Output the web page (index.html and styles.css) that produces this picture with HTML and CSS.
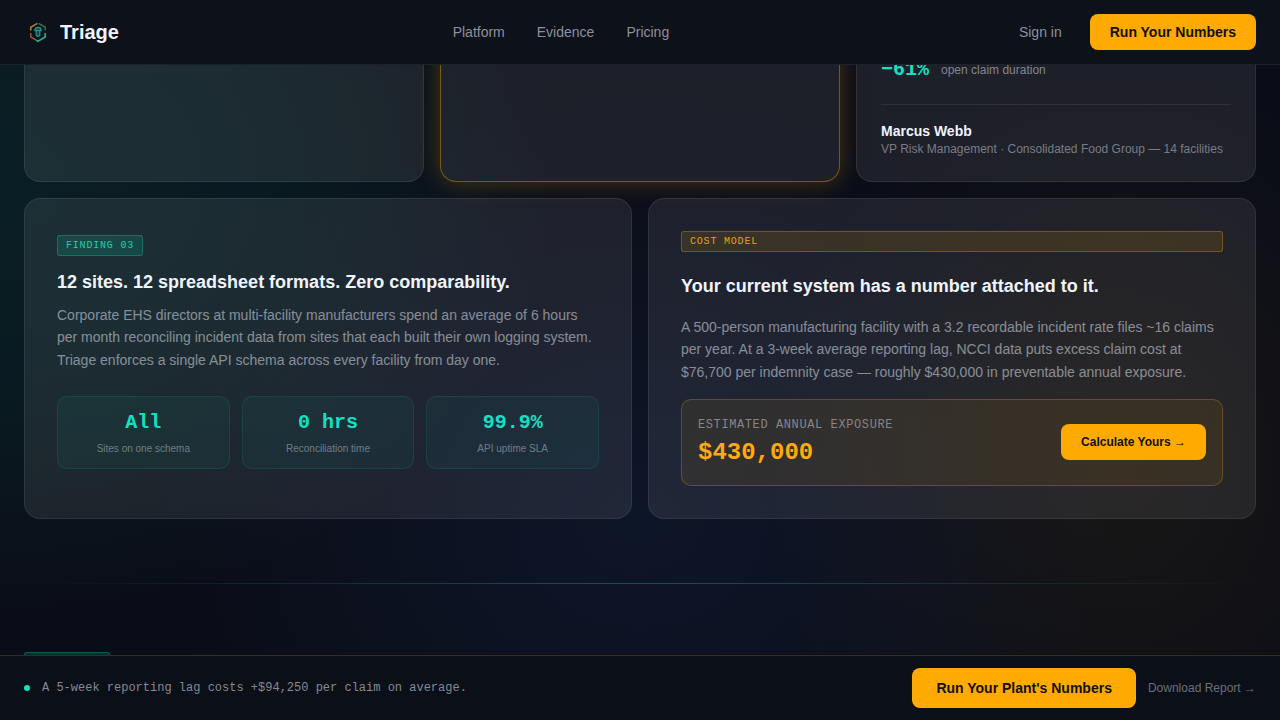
FILE: index.html
```html
<!DOCTYPE html>
<html lang="en">
<head>
  <meta charset="UTF-8">
  <meta name="viewport" content="width=device-width, initial-scale=1">
  <title>Triage</title>
  <link rel="stylesheet" href="styles.css">
</head>
<body>

  <header class="topbar">
    <a class="brand" href="#">
      <svg class="logo" viewBox="0 0 28 28" fill="none" aria-hidden="true">
        <path d="M13.4 5.4 6.8 9.2V12.4" stroke="#a67c30" stroke-width="1.6"/>
        <path d="M14.6 5.4 21.2 9.2V12.4" stroke="#267a5c" stroke-width="1.5"/>
        <path d="M6.8 15v4l5.4 3.2" stroke="#96582c" stroke-width="1.5"/>
        <path d="M21.2 15v4L14 23.2l-1.8-1" stroke="#2fa58c" stroke-width="1.7"/>
        <path d="M10.8 12.6c0-4.4 6.4-4.4 6.4 0z" fill="#134f4b" stroke="#23968a" stroke-width="1.2"/>
        <path d="M12.2 13v4.4l1.8 1.2 1.8-1.2V13" fill="#0f4a45" stroke="#23968a" stroke-width="1.2"/>
      </svg>
      <span>Triage</span>
    </a>
    <nav class="nav">
      <a href="#platform">Platform</a>
      <a href="#evidence">Evidence</a>
      <a href="#pricing">Pricing</a>
    </nav>
    <div class="actions">
      <a class="signin" href="#signin">Sign in</a>
      <button class="btn btn-nav">Run Your Numbers</button>
    </div>
  </header>

  <main>
    <section class="row row-3">
      <article class="card quote"></article>
      <article class="card quote featured"></article>
      <article class="card quote">
        <div class="result">
          <span class="result-value">−61%</span>
          <span class="result-label">open claim duration</span>
        </div>
        <div class="person">
          <div class="person-name">Marcus Webb</div>
          <div class="person-role">VP Risk Management · Consolidated Food Group — 14 facilities</div>
        </div>
      </article>
    </section>

    <section class="row row-2">
      <article class="card finding">
        <span class="tag">FINDING 03</span>
        <h2>12 sites. 12 spreadsheet formats. Zero comparability.</h2>
        <p>Corporate EHS directors at multi-facility manufacturers spend an average of 6 hours per month reconciling incident data from sites that each built their own logging system. Triage enforces a single API schema across every facility from day one.</p>
        <div class="stats">
          <div class="stat">
            <div class="stat-value">All</div>
            <div class="stat-label">Sites on one schema</div>
          </div>
          <div class="stat">
            <div class="stat-value">0 hrs</div>
            <div class="stat-label">Reconciliation time</div>
          </div>
          <div class="stat">
            <div class="stat-value">99.9%</div>
            <div class="stat-label">API uptime SLA</div>
          </div>
        </div>
      </article>

      <article class="card cost">
        <span class="tag tag-amber">COST MODEL</span>
        <h2>Your current system has a number attached to it.</h2>
        <p>A 500-person manufacturing facility with a 3.2 recordable incident rate files ~16 claims per year. At a 3-week average reporting lag, NCCI data puts excess claim cost at $76,700 per indemnity case — roughly $430,000 in preventable annual exposure.</p>
        <div class="exposure">
          <div>
            <div class="exposure-label">ESTIMATED ANNUAL EXPOSURE</div>
            <div class="exposure-value">$430,000</div>
          </div>
          <button class="btn btn-small">Calculate Yours →</button>
        </div>
      </article>
    </section>

    <hr class="divider">

    <section class="next">
      <span class="tag">&nbsp;</span>
    </section>
  </main>

  <footer class="bottombar">
    <div class="notice">
      <span class="dot"></span>
      <span>A 5-week reporting lag costs +$94,250 per claim on average.</span>
    </div>
    <div class="bottom-actions">
      <button class="btn btn-large">Run Your Plant's Numbers</button>
      <a class="download" href="#report">Download Report →</a>
    </div>
  </footer>

</body>
</html>
```

FILE: styles.css
```css
* {
  box-sizing: border-box;
}

body {
  margin: 0;
  min-height: 100vh;
  font-family: "Liberation Sans", Arial, sans-serif;
  color: #f0f4ff;
  background:
    radial-gradient(ellipse 560px 440px at 0 180px, rgba(0, 212, 170, 0.09), rgba(0, 212, 170, 0.07) 45%, transparent),
    radial-gradient(ellipse 480px 420px at 640px 520px, rgba(40, 80, 160, 0.13), transparent),
    radial-gradient(ellipse 360px 420px at 1120px 470px, rgba(255, 170, 0, 0.06), transparent),
    #0a0d17;
}

a {
  text-decoration: none;
}

h2,
p {
  margin: 0;
}

.topbar {
  position: fixed;
  top: 0;
  left: 0;
  right: 0;
  z-index: 10;
  display: flex;
  align-items: center;
  justify-content: space-between;
  height: 65px;
  padding: 0 24px;
  background: #0c111a;
  border-bottom: 1px solid #1b222b;
}

.brand {
  display: flex;
  align-items: center;
  gap: 8px;
  font-size: 20px;
  font-weight: bold;
  color: #f0f4ff;
}

.logo {
  width: 28px;
  height: 28px;
}

.nav {
  display: flex;
  gap: 32px;
}

.nav a,
.signin {
  font-size: 14px;
  color: #8c909b;
}

.actions {
  display: flex;
  align-items: center;
  gap: 12px;
}

.signin {
  padding: 0 16px;
}

.btn {
  border: none;
  border-radius: 8px;
  background: #ffaa00;
  color: #14100a;
  font-family: inherit;
  font-weight: bold;
  cursor: pointer;
}

.btn:hover {
  background: #ffb826;
}

.btn-nav {
  height: 36px;
  padding: 0 20px;
  font-size: 14px;
}

.btn-small {
  height: 36px;
  padding: 0 20px;
  font-size: 12px;
}

.btn-large {
  height: 40px;
  padding: 0 24px;
  font-size: 14px;
}

main {
  padding: 0 24px;
}

.row {
  display: grid;
  gap: 16px;
}

.row-3 {
  grid-template-columns: repeat(3, 1fr);
  margin-bottom: 16px;
}

.row-2 {
  grid-template-columns: repeat(2, 1fr);
}

.card {
  display: flex;
  flex-direction: column;
  background: rgba(255, 255, 255, 0.08);
  border: 1px solid rgba(255, 255, 255, 0.08);
  border-radius: 16px;
}

.quote {
  padding: 57px 24px 24px;
}

.featured {
  border-color: rgba(255, 170, 0, 0.4);
  box-shadow: 0 0 24px rgba(255, 170, 0, 0.25);
}

.result {
  display: flex;
  align-items: center;
  gap: 12px;
  margin-bottom: 22px;
}

.result-value {
  font-family: "Liberation Mono", monospace;
  font-size: 20px;
  line-height: 24px;
  font-weight: bold;
  color: #12e0c4;
}

.result-label {
  font-size: 12px;
  color: #83868f;
}

.person {
  padding-top: 16px;
  border-top: 1px solid rgba(255, 255, 255, 0.08);
}

.person-name {
  font-size: 14px;
  line-height: 20px;
  font-weight: bold;
}

.person-role {
  font-size: 12px;
  line-height: 16px;
  color: #797c86;
}

.finding {
  padding: 36px 32px 32px;
}

.cost {
  gap: 16px;
  padding: 32px;
}

.card h2 {
  font-size: 18px;
  line-height: 24px;
}

.card p {
  font-size: 14px;
  line-height: 1.6;
  color: rgba(240, 244, 255, 0.5);
}

.tag {
  padding: 4px 8px;
  border: 1px solid rgba(0, 212, 170, 0.3);
  border-radius: 3px;
  background: rgba(0, 212, 170, 0.16);
  font-family: "Liberation Mono", monospace;
  font-size: 10px;
  line-height: 11px;
  letter-spacing: 0.08em;
  color: #1fd0ae;
}

.tag-amber {
  border-color: rgba(255, 170, 0, 0.3);
  background: rgba(255, 170, 0, 0.12);
  color: #eba012;
}

.finding .tag {
  align-self: flex-start;
}

.finding h2 {
  margin: 14px 0 10px;
}

.cost h2 {
  margin-top: 4px;
  line-height: 28px;
}

.stats {
  display: grid;
  grid-template-columns: repeat(3, 1fr);
  gap: 12px;
  margin-top: 25px;
}

.stat {
  padding: 12px;
  text-align: center;
  background: rgba(0, 212, 170, 0.06);
  border: 1px solid rgba(0, 212, 170, 0.12);
  border-radius: 10px;
}

.stat-value {
  margin-bottom: 2px;
  font-family: "Liberation Mono", monospace;
  font-size: 20px;
  line-height: 28px;
  padding-bottom: 2px;
  font-weight: bold;
  color: #12e0c4;
}

.stat-label {
  font-size: 10px;
  line-height: 15px;
  color: rgba(240, 244, 255, 0.4);
}

.exposure {
  display: flex;
  align-items: center;
  justify-content: space-between;
  padding: 15px 16px 16px;
  background: rgba(255, 170, 0, 0.08);
  border: 1px solid rgba(255, 170, 0, 0.25);
  border-radius: 10px;
}

.exposure-label {
  margin-bottom: 2px;
  font-family: "Liberation Mono", monospace;
  font-size: 12px;
  line-height: 20px;
  letter-spacing: 0.05em;
  color: #85858a;
}

.exposure-value {
  font-family: "Liberation Mono", monospace;
  font-size: 24px;
  line-height: 32px;
  font-weight: bold;
  color: #ffaa11;
}

.divider {
  height: 1px;
  margin: 64px 0 0;
  border: none;
  background: linear-gradient(to right, transparent, rgba(0, 212, 190, 0.35), transparent);
}

.next {
  display: flex;
  padding-top: 68px;
}

.next .tag {
  width: 86px;
}

.bottombar {
  position: fixed;
  left: 0;
  right: 0;
  bottom: 0;
  z-index: 10;
  display: flex;
  align-items: center;
  justify-content: space-between;
  padding: 12px 24px;
  background: #0a0f18;
  border-top: 1px solid #3a2c18;
}

.notice {
  display: flex;
  align-items: center;
  gap: 12px;
  font-family: "Liberation Mono", monospace;
  font-size: 12px;
  color: #858993;
}

.dot {
  width: 6px;
  height: 6px;
  border-radius: 50%;
  background: #12e0c4;
}

.bottom-actions {
  display: flex;
  align-items: center;
  gap: 12px;
}

.download {
  font-size: 12px;
  color: #6b6f79;
}
```
